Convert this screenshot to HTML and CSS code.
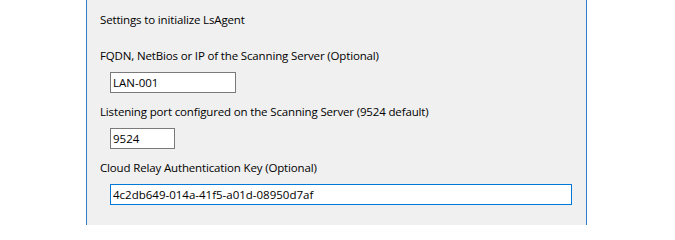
FILE: index.html
```html
<!DOCTYPE html>
<html lang="en">
<head>
<meta charset="utf-8">
<title>LsAgent settings</title>
<link rel="stylesheet" href="styles.css">
</head>
<body>
<div class="panel">
  <div class="heading">Settings to initialize LsAgent</div>
  <div class="field">
    <label class="label" for="server">FQDN, NetBios or IP of the Scanning Server (Optional)</label>
    <input class="box box-server" id="server" type="text" value="LAN-001" readonly>
  </div>
  <div class="field">
    <label class="label" for="port">Listening port configured on the Scanning Server (9524 default)</label>
    <input class="box box-port" id="port" type="text" value="9524" readonly>
  </div>
  <div class="field">
    <label class="label" for="key">Cloud Relay Authentication Key (Optional)</label>
    <input class="box box-key focused" id="key" type="text" value="4c2db649-014a-41f5-a01d-08950d7af" readonly>
  </div>
</div>
</body>
</html>
```

FILE: styles.css
```css
html, body {
  margin: 0;
  padding: 0;
  background: #ffffff;
  height: 225px;
  overflow: hidden;
}

body {
  font-family: "Open Sans", "Noto Sans", sans-serif;
  font-size: 11.5px;
  letter-spacing: -0.15px;
  color: #000000;
}

.panel {
  margin-left: 86px;
  width: 501px;
  box-sizing: border-box;
  height: 225px;
  background: #f0f0f0;
  border-left: 1px solid #2f7fc8;
  border-right: 1px solid #2f7fc8;
  padding: 12px 0 0 13px;
  display: flex;
  flex-direction: column;
}

.heading {
  line-height: 16px;
  height: 16px;
  margin-bottom: 20px;
}

.field {
  display: flex;
  flex-direction: column;
  align-items: flex-start;
  margin-bottom: 11px;
}

.label {
  line-height: 16px;
  height: 16px;
  margin-bottom: 8px;
  white-space: nowrap;
}

.box {
  margin: 0 0 0 10px;
  box-sizing: border-box;
  height: 21px;
  border: 1px solid #7a7a7a;
  background: #ffffff;
  font-family: inherit;
  font-size: 11.5px;
  letter-spacing: 0;
  color: #000000;
  padding: 0 2px;
  outline: none;
  border-radius: 0;
}

.box-server { width: 126px; }
.box-port { width: 65px; }
.box-key { width: 462px; }

.focused {
  border-color: #0078d7;
}
```
